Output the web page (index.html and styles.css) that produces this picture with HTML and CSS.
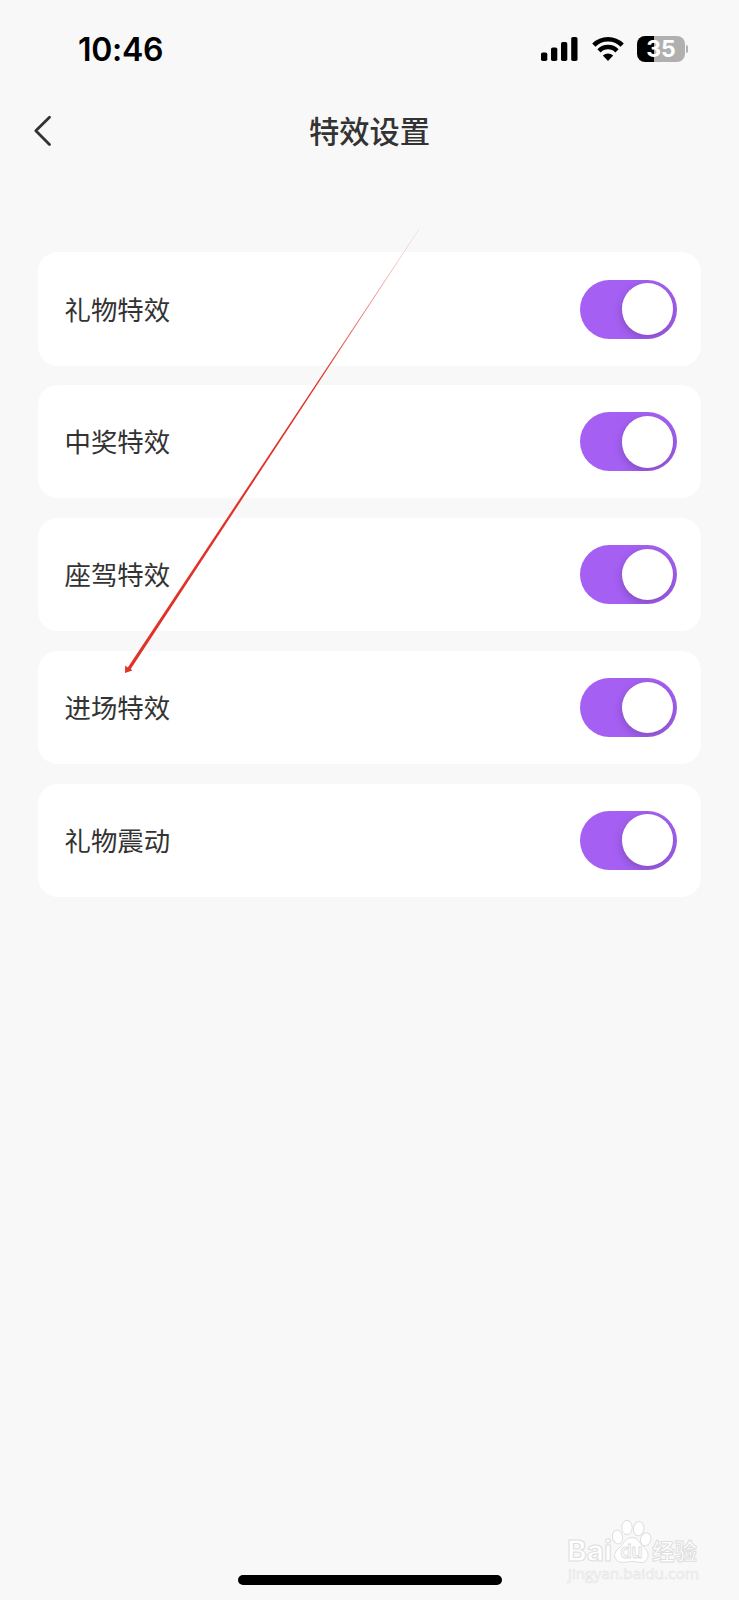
FILE: index.html
```
<!DOCTYPE html>
<html lang="zh-CN">
  <head>
    <meta charset="UTF-8" />
    <meta name="viewport" content="width=device-width, initial-scale=1.0" />
    <title>特效设置</title>
    <link rel="stylesheet" href="styles.css">
  </head>
  <body>
    <div class="screen">
      <div class="status-bar">
        <div class="time">10:46</div>
        <div class="status-icons">
          <svg class="signal" width="37" height="26" viewBox="0 0 37 26">
            <rect x="0" y="16.5" width="6.3" height="8.5" rx="1.8" />
            <rect x="10" y="11.5" width="6.3" height="13.5" rx="1.8" />
            <rect x="20" y="6" width="6.3" height="19" rx="1.8" />
            <rect x="30.2" y="1" width="6.3" height="24" rx="1.8" />
          </svg>
          <svg class="wifi" width="32" height="26" viewBox="0 0 32 26">
            <path d="M1.8 9.2 A20 20 0 0 1 30.2 9.2" fill="none" stroke="#000" stroke-width="4.6" />
            <path d="M7 14.9 A12.6 12.6 0 0 1 25 14.9" fill="none" stroke="#000" stroke-width="4.5" />
            <path d="M10.8 19.6 Q16 15.2 21.2 19.6 L16 25 Z" />
          </svg>
          <div class="battery">35</div>
          <div class="battery-tip"></div>
        </div>
      </div>

      <div class="nav-bar">
        <svg class="back" width="20" height="34" viewBox="0 0 20 34">
          <path d="M16.5 3.3 L2.8 16.8 L16.5 30.6" />
        </svg>
        <h1 class="title">特效设置</h1>
      </div>

      <div class="list">
        <div class="card">
          <span>礼物特效</span>
          <div class="switch"><div class="knob"></div></div>
        </div>
        <div class="card">
          <span>中奖特效</span>
          <div class="switch"><div class="knob"></div></div>
        </div>
        <div class="card">
          <span>座驾特效</span>
          <div class="switch"><div class="knob"></div></div>
        </div>
        <div class="card">
          <span>进场特效</span>
          <div class="switch"><div class="knob"></div></div>
        </div>
        <div class="card">
          <span>礼物震动</span>
          <div class="switch"><div class="knob"></div></div>
        </div>
      </div>

      <div class="bottom">
        <svg class="watermark" width="140" height="70" viewBox="0 0 140 70">
          <g class="mark">
            <text class="mark-text" x="5" y="41" font-size="29" textLength="45" lengthAdjust="spacingAndGlyphs">Bai</text>
            <ellipse cx="55.5" cy="17" rx="5" ry="7" transform="rotate(-12 55.5 17)" />
            <ellipse cx="65" cy="7.5" rx="5.2" ry="7.2" />
            <ellipse cx="76.7" cy="8.7" rx="5.2" ry="7.2" transform="rotate(8 76.7 8.7)" />
            <ellipse cx="83.7" cy="19.3" rx="5.2" ry="6.6" transform="rotate(16 83.7 19.3)" />
            <path d="M70 17.5 C64 17.5 61.5 24 57 28 C52 32.5 51.5 36 54 39.5 C58 44.5 64 41.5 70 41.5 C76 41.5 80 44.5 84 40.5 C88 36 86 31 81.5 27 C77 23 76 17.5 70 17.5 Z" />
            <text class="mark-du" x="58.5" y="38" font-size="19" textLength="22" lengthAdjust="spacingAndGlyphs">du</text>
            <text class="mark-cn" x="90" y="40" font-size="22.5">经验</text>
            <text class="mark-url" x="6" y="58.5" font-size="15" textLength="131" lengthAdjust="spacingAndGlyphs">jingyan.baidu.com</text>
          </g>
        </svg>
        <div class="home-bar"></div>
      </div>

      <svg class="arrow" width="310" height="460" viewBox="115 225 310 460">
        <defs>
          <linearGradient id="fade" gradientUnits="userSpaceOnUse" x1="420" y1="228" x2="320" y2="378">
            <stop offset="0" stop-color="#df3228" stop-opacity="0.3" />
            <stop offset="1" stop-color="#df3228" />
          </linearGradient>
        </defs>
        <path fill="url(#fade)" d="M419.3 229 L130.4 669.6 L127.6 667.8 L419 229 Z" />
        <path fill="#df3228" d="M125 673 L125.2 665.5 L127.8 667.5 L130.8 669 L132.3 670.5 Z" />
      </svg>
    </div>
  </body>
</html>
```

FILE: styles.css
```
* {
  padding: 0;
  margin: 0;
  box-sizing: border-box;
}
body {
  background-color: #f8f8f8;
  color: #333333;
  font-family: "Noto Sans CJK SC", sans-serif;
}
.screen {
  position: relative;
  display: flex;
  flex-direction: column;
  width: 739px;
  height: 1600px;
  overflow: hidden;
}
.status-bar {
  display: flex;
  justify-content: space-between;
  align-items: center;
  height: 98px;
  padding: 0 51px 0 78px;
}
.time {
  color: #000000;
  font-family: Inter, sans-serif;
  font-size: 32px;
  font-weight: 600;
  letter-spacing: -0.3px;
}
.status-icons {
  display: flex;
  align-items: center;
}
.wifi {
  margin: 0 13px 0 14px;
}
.battery {
  width: 48px;
  height: 26px;
  border-radius: 8px;
  background: linear-gradient(to right, #000000 17px, #b0b0b0 17px);
  color: #ffffff;
  font-family: Inter, sans-serif;
  font-size: 23px;
  font-weight: 700;
  line-height: 26px;
  text-align: center;
}
.battery-tip {
  width: 2px;
  height: 8px;
  margin-left: 1px;
  border-radius: 0 3px 3px 0;
  background-color: #b0b0b0;
}
.nav-bar {
  display: flex;
  align-items: center;
  height: 66px;
  padding: 0 33px;
}
.back {
  fill: none;
  stroke: #333333;
  stroke-width: 2.8;
  stroke-linecap: round;
  stroke-linejoin: round;
}
.title {
  flex: 1;
  padding: 0 20px 3px 0;
  font-size: 30.3px;
  font-weight: 500;
  line-height: 44px;
  text-align: center;
}
.list {
  display: flex;
  flex-direction: column;
  gap: 19.5px;
  padding: 88.4px 38px 0;
}
.card {
  display: flex;
  justify-content: space-between;
  align-items: center;
  height: 113.3px;
  padding: 0 24.3px 0 26.5px;
  border-radius: 20px;
  background-color: #ffffff;
  font-size: 26.4px;
}
.card span {
  padding-bottom: 2px;
}
.switch {
  display: flex;
  justify-content: flex-end;
  align-items: center;
  width: 96.5px;
  height: 59px;
  padding-right: 3.5px;
  border-radius: 30px;
  background-color: #a560f3;
  overflow: hidden;
}
.knob {
  width: 51.5px;
  height: 51.5px;
  border-radius: 50%;
  background-color: #ffffff;
  box-shadow: 0 3px 10px rgba(0, 0, 0, 0.22);
}
.bottom {
  display: flex;
  flex-direction: column;
  margin-top: auto;
  padding-bottom: 15px;
}
.watermark {
  align-self: flex-end;
  margin-right: 37px;
  margin-bottom: -15px;
  overflow: visible;
}
.mark {
  fill: #ffffff;
  stroke: #dedede;
  stroke-width: 1;
}
.mark-text {
  font-family: Inter, sans-serif;
  font-weight: 700;
}
.mark-du {
  font-family: Inter, sans-serif;
  font-weight: 600;
}
.mark-cn {
  font-weight: 700;
}
.mark-url {
  font-family: "Open Sans", sans-serif;
  stroke: #e6e6e6;
  stroke-width: 0.7;
}
.home-bar {
  align-self: center;
  width: 264px;
  height: 10px;
  border-radius: 5px;
  background-color: #000000;
}
/* pointer line drawn over the cards */
.arrow {
  position: absolute;
  left: 115px;
  top: 225px;
}
```
